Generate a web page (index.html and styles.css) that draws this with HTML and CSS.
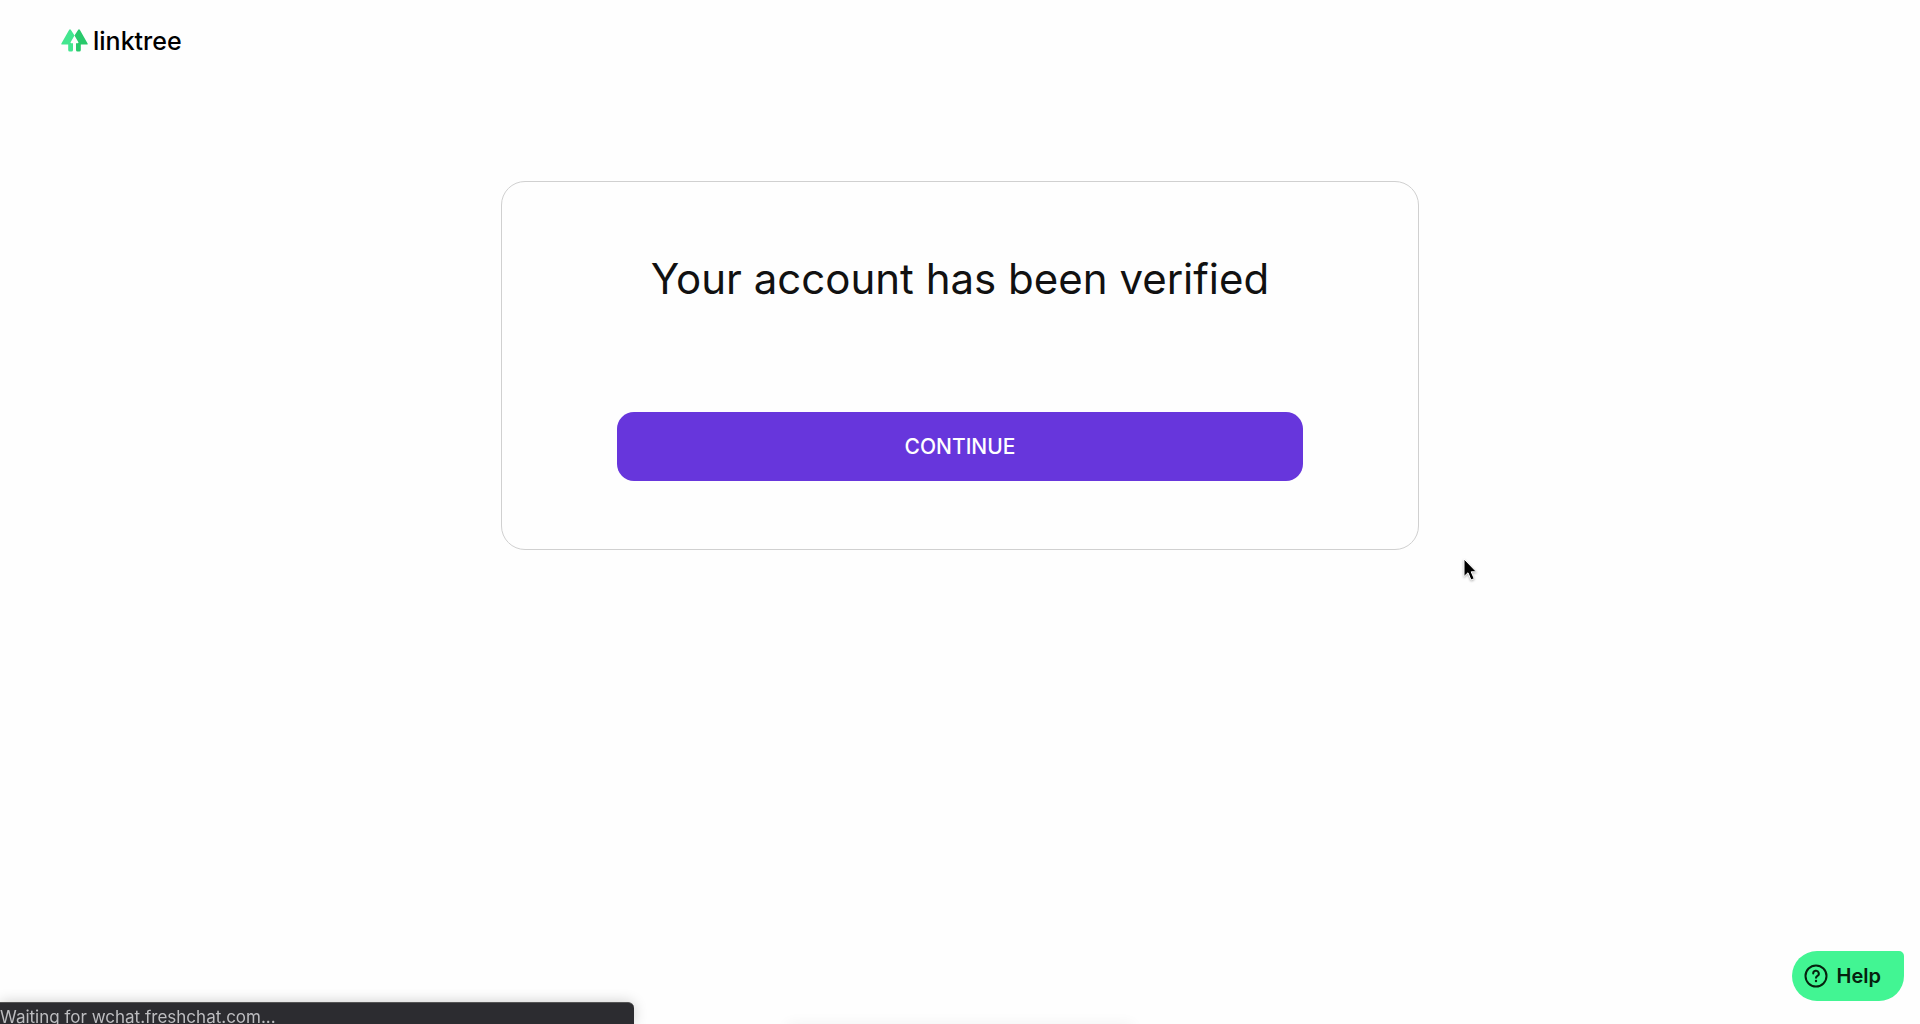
FILE: index.html
```
<!DOCTYPE html>
<html lang="en">
<head>
    <meta charset="UTF-8">
    <meta name="viewport" content="width=device-width, initial-scale=1.0">
    <title>Linktree</title>
    <link rel="stylesheet" href="styles.css">
</head>
<body>
    <header class="header">
        <a class="logo" href="#">
            <svg class="logo-icon" width="27" height="23" viewBox="0 0 27 23" aria-hidden="true">
                <path fill="#43e68f" d="M8.2 .8 Q9 -.4 9.8 .8 L13.5 6.5 L9.6 13.2 Q9.4 14.2 10.4 14.2 H12 V21 Q12 22.5 10.5 22.5 H8.7 Q7.2 22.5 7.2 21 V15.5 H1 Q0 15.5 .4 14.5 Z"/>
                <path fill="#28c96b" d="M17.2 .8 Q18 -.4 18.8 .8 L26.6 14.5 Q27 15.5 26 15.5 H19.8 V21 Q19.8 22.5 18.3 22.5 H16.5 Q15 22.5 15 21 V14.2 H16.6 Q17.6 14.2 17.4 13.2 L13.5 6.5 Z"/>
            </svg>
            <span class="logo-text">linktree</span>
        </a>
    </header>

    <main class="main">
        <section class="card">
            <h1>Your account has been verified</h1>
            <button class="continue" type="button">CONTINUE</button>
        </section>
    </main>

    <button class="help" type="button">
        <svg width="24" height="24" viewBox="0 0 24 24" fill="none" stroke="currentColor" stroke-width="2" stroke-linecap="round" aria-hidden="true">
            <circle cx="12" cy="12" r="10.5"/>
            <path d="M9.2 9.6 A2.8 2.8 0 1 1 13.4 12 Q12 12.7 12 13.8"/>
            <circle cx="12" cy="17" r="1.2" fill="currentColor" stroke="none"/>
        </svg>
        Help
    </button>

    <svg class="cursor" width="16" height="24" viewBox="0 0 16 24" aria-hidden="true">
        <path fill="#000" stroke="#fff" stroke-width="1" d="M1 1 V18.5 L5 14.8 L8 22 L11.2 20.6 L8.2 13.8 H13.4 Z"/>
    </svg>

    <div class="bottom-shadow"></div>
    <div class="status">Waiting for wchat.freshchat.com...</div>
</body>
</html>
```
FILE: styles.css
```
* {
    box-sizing: border-box;
}
body {
    font-family: Inter, "Liberation Sans", sans-serif;
    background: #fefefe;
    color: #111;
    margin: 0;
    min-height: 100vh;
    overflow: hidden;
}
.header {
    display: flex;
    padding: 25px 61px;
}
.logo {
    display: flex;
    align-items: center;
    gap: 5px;
    color: #000;
    text-decoration: none;
}
.logo-icon {
    margin-bottom: 2px;
}
.logo-text {
    font-size: 25px;
    font-weight: 500;
    line-height: 32px;
}
.main {
    display: flex;
    justify-content: center;
    padding: 99px 24px 24px;
}
.card {
    width: 100%;
    max-width: 918px;
    padding: 68px 115px;
    border: 1px solid #d0d0d0;
    border-radius: 24px;
    text-align: center;
}
h1 {
    margin: 0 0 104px;
    font-size: 42px;
    font-weight: 400;
    line-height: 58px;
}
.continue {
    display: block;
    width: 100%;
    padding: 22px;
    border: none;
    border-radius: 17px;
    background: #6736dc;
    color: #fff;
    font-family: inherit;
    font-size: 21px;
    font-weight: 500;
    line-height: 25px;
    cursor: pointer;
}
.help {
    position: fixed;
    right: 16px;
    bottom: 23px;
    display: flex;
    align-items: center;
    gap: 9px;
    padding: 13px 23px 13px 12px;
    border: none;
    border-radius: 25px 5px 25px 25px;
    background: #42f593;
    color: #06210e;
    font-family: inherit;
    font-size: 20px;
    font-weight: 600;
    line-height: 24px;
    cursor: pointer;
}
.cursor {
    position: fixed;
    left: 1463px;
    top: 558px;
    filter: drop-shadow(0 1px 1px rgba(0, 0, 0, 0.3));
}
.status {
    position: fixed;
    left: 0;
    bottom: 0;
    width: 33%;
    height: 22px;
    padding-top: 3px;
    border-top: 1px solid #555;
    border-top-right-radius: 6px;
    background: #2c2c30;
    box-shadow: 0 0 14px rgba(0, 0, 0, 0.2);
    color: #bdbdc0;
    font-size: 17px;
    line-height: 22px;
    white-space: nowrap;
}
.bottom-shadow {
    position: fixed;
    left: 41%;
    right: 41%;
    bottom: -10px;
    height: 10px;
    box-shadow: 0 0 14px rgba(0, 0, 0, 0.06);
}
```
